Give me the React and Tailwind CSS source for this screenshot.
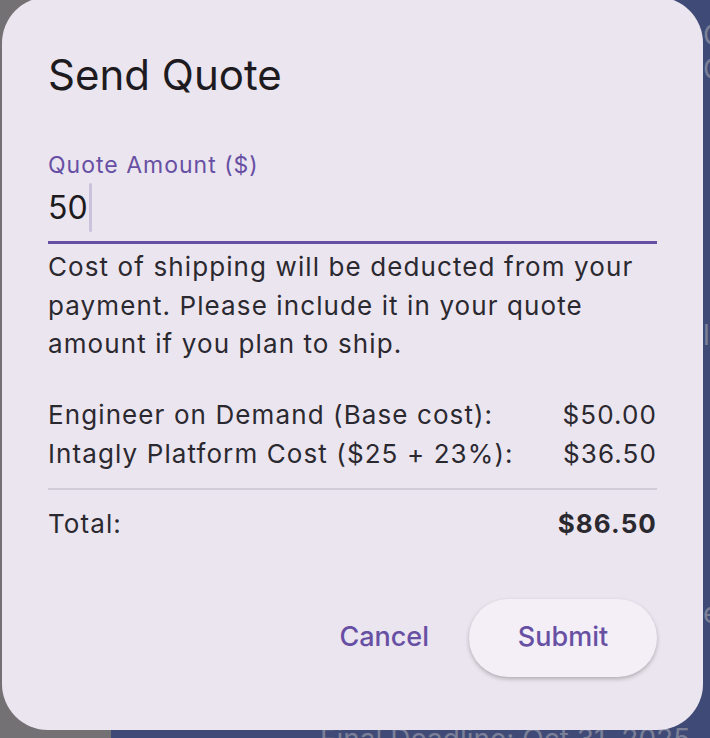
export default function App() {
  return (
    <div className="relative w-[710px] h-[738px] overflow-hidden font-['Inter',sans-serif]">
      {/* Page behind the dialog (dimmed by scrim) */}
      <div className="flex h-full">
        <div className="w-[111px] shrink-0 bg-[#747174]" />
        <div className="flex-1 flex flex-col bg-[#404a76] text-[#7b8097] text-[28px] whitespace-nowrap overflow-hidden">
          <div className="pl-[592px] mt-[18px] leading-[34px]">Client</div>
          <div className="pl-[592px] leading-[34px]">Order</div>
          <div className="pl-[592px] mt-[232px] leading-[34px]">lion</div>
          <div className="pl-[592px] mt-[244px] leading-[34px]">ers</div>
          <div className="pl-[209px] mt-[92px] leading-[34px]">Final Deadline: Oct 31, 2025</div>
        </div>
      </div>

      {/* Dialog */}
      <div className="absolute left-[2px] top-[-3px] w-[701px] h-[733px] rounded-[46px] bg-[#ebe5ef] px-[46px] pt-[50px] text-[#1d1b20]">
        <h2 className="text-[42px] leading-[56px] font-normal">Send Quote</h2>

        {/* Quote amount field */}
        <div className="mt-[48px]">
          <label className="block text-[23px] leading-[28px] tracking-[1px] text-[#6750a4]">
            Quote Amount ($)
          </label>
          <div className="mt-[4px] flex items-center h-[49px]">
            <span className="text-[32px] leading-[40px] text-[#1d1b20]">50</span>
            <span className="ml-[1px] w-[3px] h-[49px] rounded-full bg-[#cbc2dc]" />
          </div>
          <div className="mt-[9px] h-[3px] bg-[#6750a4]" />
        </div>

        <p className="mt-[4px] text-[26px] leading-[38.5px] tracking-[1.1px] text-[#2b2930]">
          Cost of shipping will be deducted from your payment. Please include it in your quote amount if you plan to ship.
        </p>

        {/* Cost breakdown */}
        <div className="mt-[31px] text-[26px] leading-[39px] tracking-[1.1px] text-[#2b2930]">
          <div className="flex justify-between">
            <span>Engineer on Demand (Base cost):</span>
            <span>$50.00</span>
          </div>
          <div className="flex justify-between">
            <span>Intagly Platform Cost ($25 + 23%):</span>
            <span>$36.50</span>
          </div>
        </div>
        <div className="mt-[15px] h-[2px] bg-[#d2cbd8]" />
        <div className="mt-[14px] flex justify-between text-[26px] leading-[39px] tracking-[1.1px] text-[#2b2930]">
          <span>Total:</span>
          <span className="font-bold">$86.50</span>
        </div>

        {/* Actions */}
        <div className="mt-[56px] flex justify-end items-center gap-[20px]">
          <button className="h-[78px] px-[20px] text-[27px] font-medium text-[#6750a4]">
            Cancel
          </button>
          <button className="w-[188px] h-[78px] rounded-full bg-[#f4eff7] text-[27px] font-medium text-[#6750a4] shadow-[0_2px_4px_rgba(0,0,0,0.25)]">
            Submit
          </button>
        </div>
      </div>
    </div>
  );
}
